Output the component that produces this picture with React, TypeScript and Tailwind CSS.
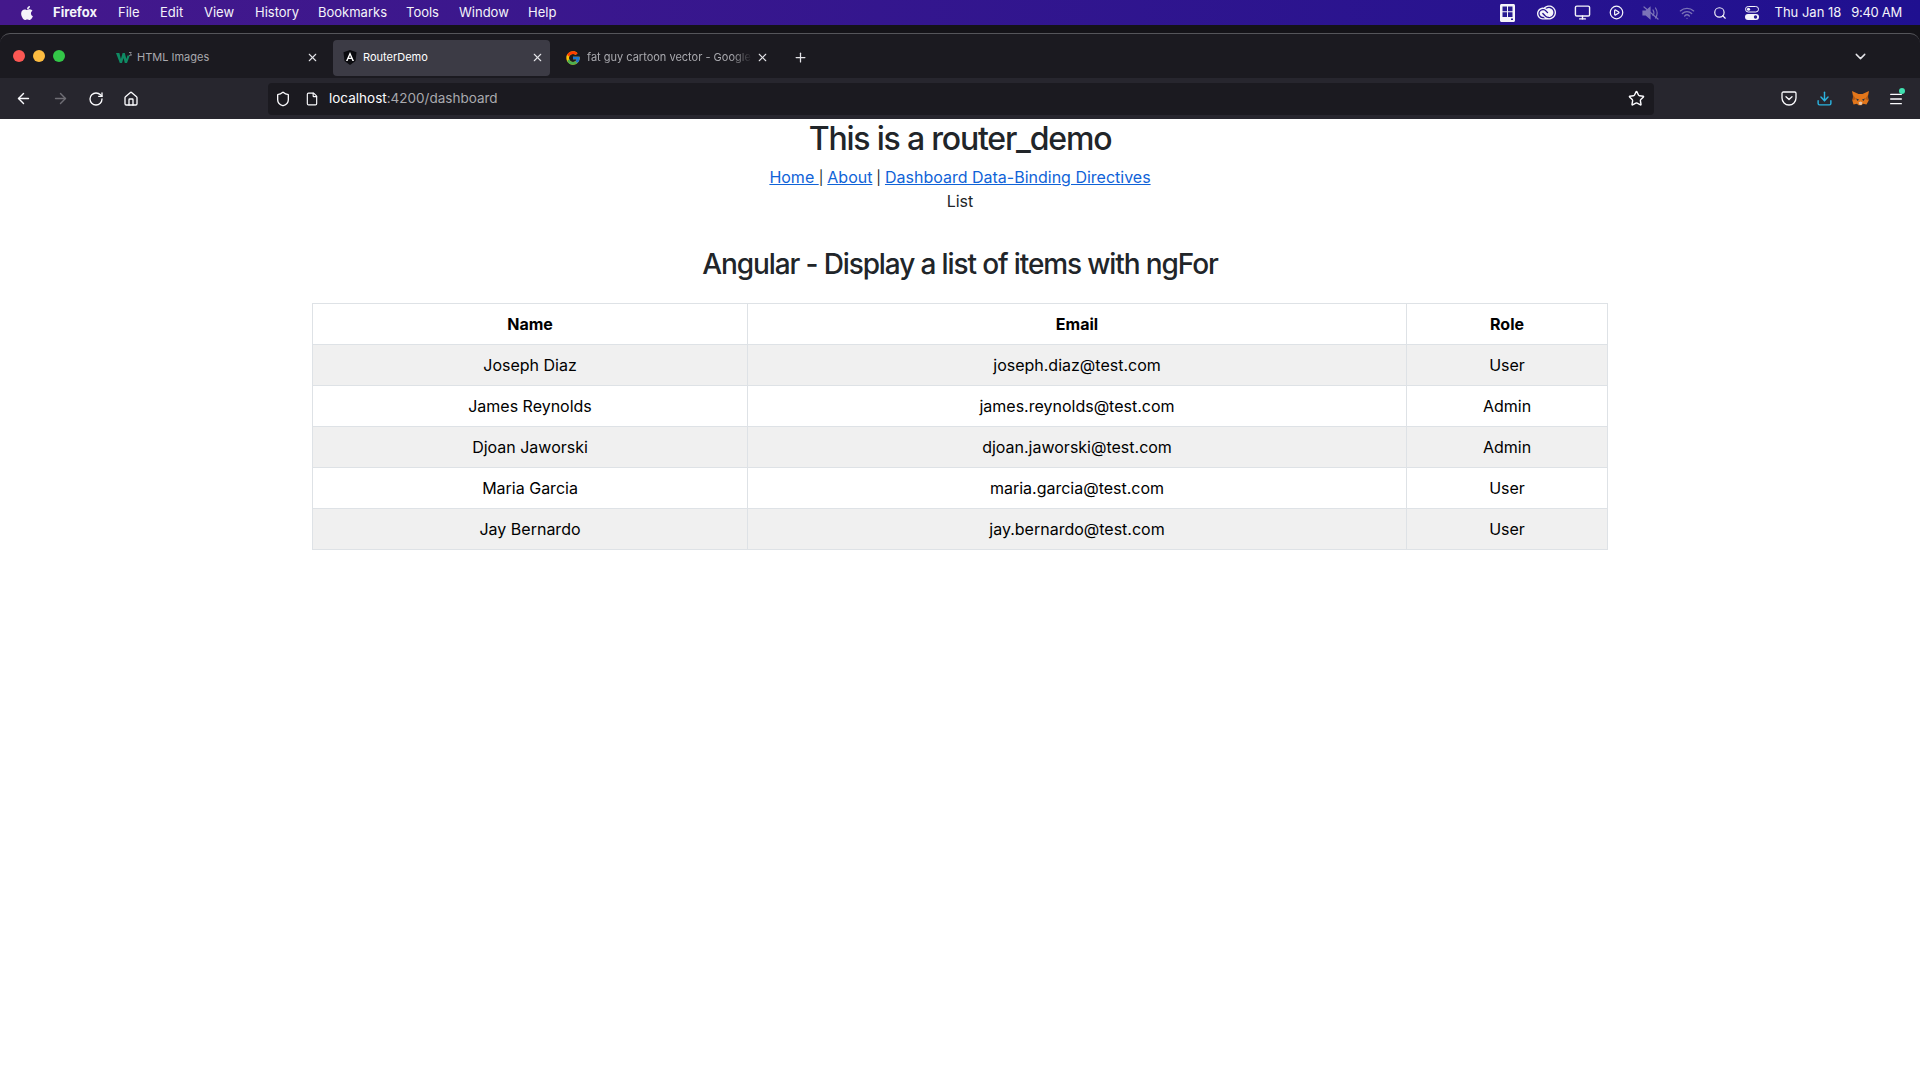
import { ArrowLeft, ArrowRight, ChevronDown, File, Home, Menu, Monitor, Plus, RotateCw, Search, Shield, Star, Wifi, X, Download, CirclePlay } from 'lucide-react';
import { FaApple } from 'react-icons/fa';
import { FcGoogle } from 'react-icons/fc';
import { SiAdobecreativecloud } from 'react-icons/si';

const menuItems = [
  { label: 'File', width: 'w-[42px]' },
  { label: 'Edit', width: 'w-[44px]' },
  { label: 'View', width: 'w-[51px]' },
  { label: 'History', width: 'w-[63px]' },
  { label: 'Bookmarks', width: 'w-[88px]' },
  { label: 'Tools', width: 'w-[53px]' },
  { label: 'Window', width: 'w-[69px]' },
  { label: 'Help', width: 'w-[40px]' },
];

const users = [
  { name: 'Joseph Diaz', email: 'joseph.diaz@test.com', role: 'User' },
  { name: 'James Reynolds', email: 'james.reynolds@test.com', role: 'Admin' },
  { name: 'Djoan Jaworski', email: 'djoan.jaworski@test.com', role: 'Admin' },
  { name: 'Maria Garcia', email: 'maria.garcia@test.com', role: 'User' },
  { name: 'Jay Bernardo', email: 'jay.bernardo@test.com', role: 'User' },
];

function AngularIcon() {
  return (
    <svg width="14" height="15" viewBox="0 0 14 15">
      <path d="M7 0 13.5 2.3 12.5 11 7 15 1.5 11 .5 2.3Z" fill="#0b0b0f" />
      <path d="M7 2 3 11h1.6l.8-2h3.2l.8 2H11L7 2Zm-1 5.7L7 5.2l1 2.5H6Z" fill="#ffffff" />
    </svg>
  );
}

function W3Icon() {
  return (
    <svg width="16" height="12" viewBox="0 0 16 12">
      <path d="M0 1h3.4l1.5 6 1.7-6h2.2l1.6 6 1-3.4h2.4L11 11H8.8L7.5 6 6 11H3.8Z" fill="#0f8a63" />
      <path d="M13 0h2.6v.7l-1 1c.7.1 1.2.5 1.2 1.1 0 .8-.7 1.2-1.5 1.2-.5 0-1-.1-1.3-.3l.2-.6c.3.1.7.3 1 .3.4 0 .7-.2.7-.5s-.4-.5-1.1-.5v-.5l1-1H13Z" fill="#8a8a90" />
    </svg>
  );
}

function PocketIcon() {
  return (
    <svg width="16" height="15" viewBox="0 0 16 15" fill="none" stroke="#fbfbfe" strokeWidth="1.3" strokeLinecap="round" strokeLinejoin="round">
      <path d="M2.3 1h11.4c.7 0 1.3.6 1.3 1.3V7c0 3.8-3.1 7-7 7s-7-3.2-7-7V2.3C1 1.6 1.6 1 2.3 1Z" />
      <path d="m5 5.8 3 2.8 3-2.8" />
    </svg>
  );
}

function FoxIcon() {
  return (
    <svg width="17" height="16" viewBox="0 0 17 16">
      <path d="M0 0 6.5 3h4L17 0l-1.2 6 .9 3.5-2.2 4-3.5-.7-1.5 1.5H6.5L5 12.8l-3.5.7-1.2-4L1.2 6Z" fill="#e2761b" />
      <path d="M4 7.5 7 8.5 5.5 10Zm9 0L10 8.5 11.5 10Z" fill="#233447" />
      <path d="m6.5 11.5 2-1 2 1-1 2.5h-2Z" fill="#e4c4a8" />
      <path d="m1 4 3 4-3.3 1.5Zm15 0-3 4 3.3 1.5Z" fill="#b65a12" />
    </svg>
  );
}

function MacDriveIcon() {
  return (
    <svg width="15" height="18" viewBox="0 0 15 18">
      <path d="M1.5 0h12c.8 0 1.5.7 1.5 1.5v15c0 .8-.7 1.5-1.5 1.5h-12C.7 18 0 17.3 0 16.5v-15C0 .7.7 0 1.5 0Z" fill="#f4f4fa" />
      <path d="M2.5 2.5H7v4.700H2.500Zm5.500 0h4.500v4.700H8Zm-5.500 5.700H7v4.700H2.500Zm5.500 0h4.500v4.700H8Z" fill="#271a92" />
      <rect x="11" y="14.5" width="2" height="1.5" fill="#271a92" />
    </svg>
  );
}

function ControlCenterIcon() {
  return (
    <svg width="14" height="14" viewBox="0 0 14 14">
      <rect x="0.5" y="0.5" width="13" height="5.5" rx="2.75" fill="none" stroke="#f4f4fa" />
      <circle cx="3.5" cy="3.25" r="1.6" fill="#f4f4fa" />
      <rect x="0" y="8" width="14" height="6" rx="3" fill="#f4f4fa" />
      <circle cx="10.5" cy="11" r="1.7" fill="#271a92" />
    </svg>
  );
}

function MutedSpeakerIcon() {
  return (
    <svg width="18" height="14" viewBox="0 0 18 14" fill="none" stroke="#7c74b8" strokeWidth="1.2" strokeLinecap="round">
      <path d="M1 5h3l4-3.5v11L4 9H1Z" fill="#7c74b8" />
      <path d="M11 4c1 1.5 1 4 0 5.5M13.5 2c2 3 2 7 0 10" />
      <path d="M2 1l14 12" />
    </svg>
  );
}

function TrafficLights() {
  return (
    <div className="flex items-center gap-2">
      <div className="w-3 h-3 rounded-full bg-[#fc5753]" />
      <div className="w-3 h-3 rounded-full bg-[#fdbc40]" />
      <div className="w-3 h-3 rounded-full bg-[#33c748]" />
    </div>
  );
}

export default function App() {
  return (
    <div className="h-[1080px] flex flex-col overflow-hidden bg-white" style={{ fontFamily: 'Inter, "Liberation Sans", sans-serif' }}>
      <div className="h-[25px] flex items-center justify-between bg-gradient-to-r from-[#44188c] to-[#1f1090] text-[13px] text-[#f4f4fa] pl-[19px] pr-[18px]">
        <div className="flex items-center">
          <FaApple className="text-[16px] w-[34px] pr-[18px]" />
          <span className="font-bold w-[65px]">Firefox</span>
          {menuItems.map(item => (
            <span key={item.label} className={item.width}>{item.label}</span>
          ))}
        </div>
        <div className="flex items-center">
          <div className="w-[37px]"><MacDriveIcon /></div>
          <div className="w-[37px]"><SiAdobecreativecloud className="text-[19px]" /></div>
          <div className="w-[35px]"><Monitor size={17} /></div>
          <div className="w-[33px]"><CirclePlay size={15} /></div>
          <div className="w-[37px]"><MutedSpeakerIcon /></div>
          <div className="w-[34px]"><Wifi size={16} className="text-[#7c74b8]" /></div>
          <div className="w-[32px]"><Search size={14} /></div>
          <div className="w-[30px]"><ControlCenterIcon /></div>
          <span>Thu Jan 18</span>
          <span className="ml-[10px] tracking-[-0.3px]">9:40 AM</span>
        </div>
      </div>

      <div className="h-[94px] bg-[#141318] flex flex-col pt-[8px]">
        <div className="flex-1 flex flex-col rounded-t-[10px] border-t border-[#55555a] bg-[#1b1a20]">
          <div className="h-[44px] flex items-center pl-[13px] text-[11px]">
            <TrafficLights />
            <div className="w-[217px] shrink-0 flex items-center ml-[51px] mt-[3px] text-[#a9a9ae]">
              <W3Icon />
              <span className="ml-[5px] flex-1">HTML Images</span>
              <X size={13} className="text-[#e4e4e8] mr-[14px]" />
            </div>
            <div className="w-[217px] shrink-0 h-[36px] flex items-center rounded-[4px] bg-[#3c3b45] text-white pl-[10px] pr-[6px] mt-[3px]">
              <AngularIcon />
              <span className="ml-[6px] flex-1">RouterDemo</span>
              <X size={13} className="text-[#e4e4e8]" />
            </div>
            <div className="w-[245px] shrink-0 flex items-center ml-[15px] mt-[3px] text-[#a9a9ae]">
              <FcGoogle className="text-[16px] shrink-0" />
              <span className="ml-[6px] w-[165px] shrink-0 whitespace-nowrap overflow-hidden [mask-image:linear-gradient(to_right,black_88%,transparent)]">fat guy cartoon vector - Google</span>
              <X size={13} className="text-[#e4e4e8] ml-[4px] shrink-0" />
              <Plus size={15} className="text-[#e4e4e8] ml-[24px] shrink-0" />
            </div>
            <ChevronDown size={17} className="text-[#e4e4e8] ml-auto mr-[51px]" />
          </div>

          <div className="flex-1 flex items-center bg-[#27262e] pl-[15px] pr-[16px] text-[#fbfbfe]">
            <ArrowLeft size={17} />
            <ArrowRight size={17} className="ml-[20px] text-[#6f6e75]" />
            <RotateCw size={16} className="ml-[19px]" />
            <Home size={16} className="ml-[19px]" />
            <div className="h-[32px] w-[1386px] ml-[129px] flex items-center rounded-[4px] bg-[#1b1a20] pl-[7px] pr-[9px]">
              <Shield size={16} />
              <File size={14} className="ml-[14px]" />
              <span className="ml-[10px] text-[13.5px]">localhost<span className="text-[#a9a9ae]">:4200/dashboard</span></span>
              <Star size={17} className="ml-auto" />
            </div>
            <div className="ml-auto flex items-center">
              <PocketIcon />
              <Download size={17} className="ml-[19px] text-[#2bb4e0]" />
              <div className="ml-[19px]"><FoxIcon /></div>
              <div className="relative ml-[19px]">
                <Menu size={16} />
                <div className="absolute -top-[3px] -right-[1px] w-[6px] h-[6px] rounded-full bg-[#3fe1b0]" />
              </div>
            </div>
          </div>
        </div>
      </div>

      <main className="flex-1 text-center text-[#212529] text-[16px]">
        <h1 className="text-[32px] font-medium leading-[38px] mt-[1px] tracking-[-1.2px]">This is a router_demo</h1>
        <div className="mt-[7px] leading-[24px]">
          <a href="#" className="text-[#1063d8] underline">Home </a>
          <span className="text-[14px] leading-none">{' | '}</span>
          <a href="#" className="text-[#1063d8] underline">About</a>
          <span className="text-[14px] leading-none">{' | '}</span>
          <a href="#" className="text-[#1063d8] underline">Dashboard Data-Binding Directives</a>
          <br />
          List
        </div>
        <h2 className="text-[28px] font-medium leading-[34px] mt-[34px] tracking-[-1.12px]">Angular - Display a list of items with ngFor</h2>
        <table className="w-[1295px] mx-auto mt-[22px] border-collapse table-fixed text-black">
          <colgroup>
            <col className="w-[435px]" />
            <col className="w-[659px]" />
            <col className="w-[201px]" />
          </colgroup>
          <thead>
            <tr className="h-[41px]">
              <th className="border border-[#dee2e6] font-bold">Name</th>
              <th className="border border-[#dee2e6] font-bold">Email</th>
              <th className="border border-[#dee2e6] font-bold">Role</th>
            </tr>
          </thead>
          <tbody>
            {users.map((user, index) => (
              <tr key={user.email} className={index % 2 === 0 ? 'h-[41px] bg-[#f0f0f0]' : 'h-[41px]'}>
                <td className="border border-[#dee2e6]">{user.name}</td>
                <td className="border border-[#dee2e6]">{user.email}</td>
                <td className="border border-[#dee2e6]">{user.role}</td>
              </tr>
            ))}
          </tbody>
        </table>
      </main>
    </div>
  );
}
